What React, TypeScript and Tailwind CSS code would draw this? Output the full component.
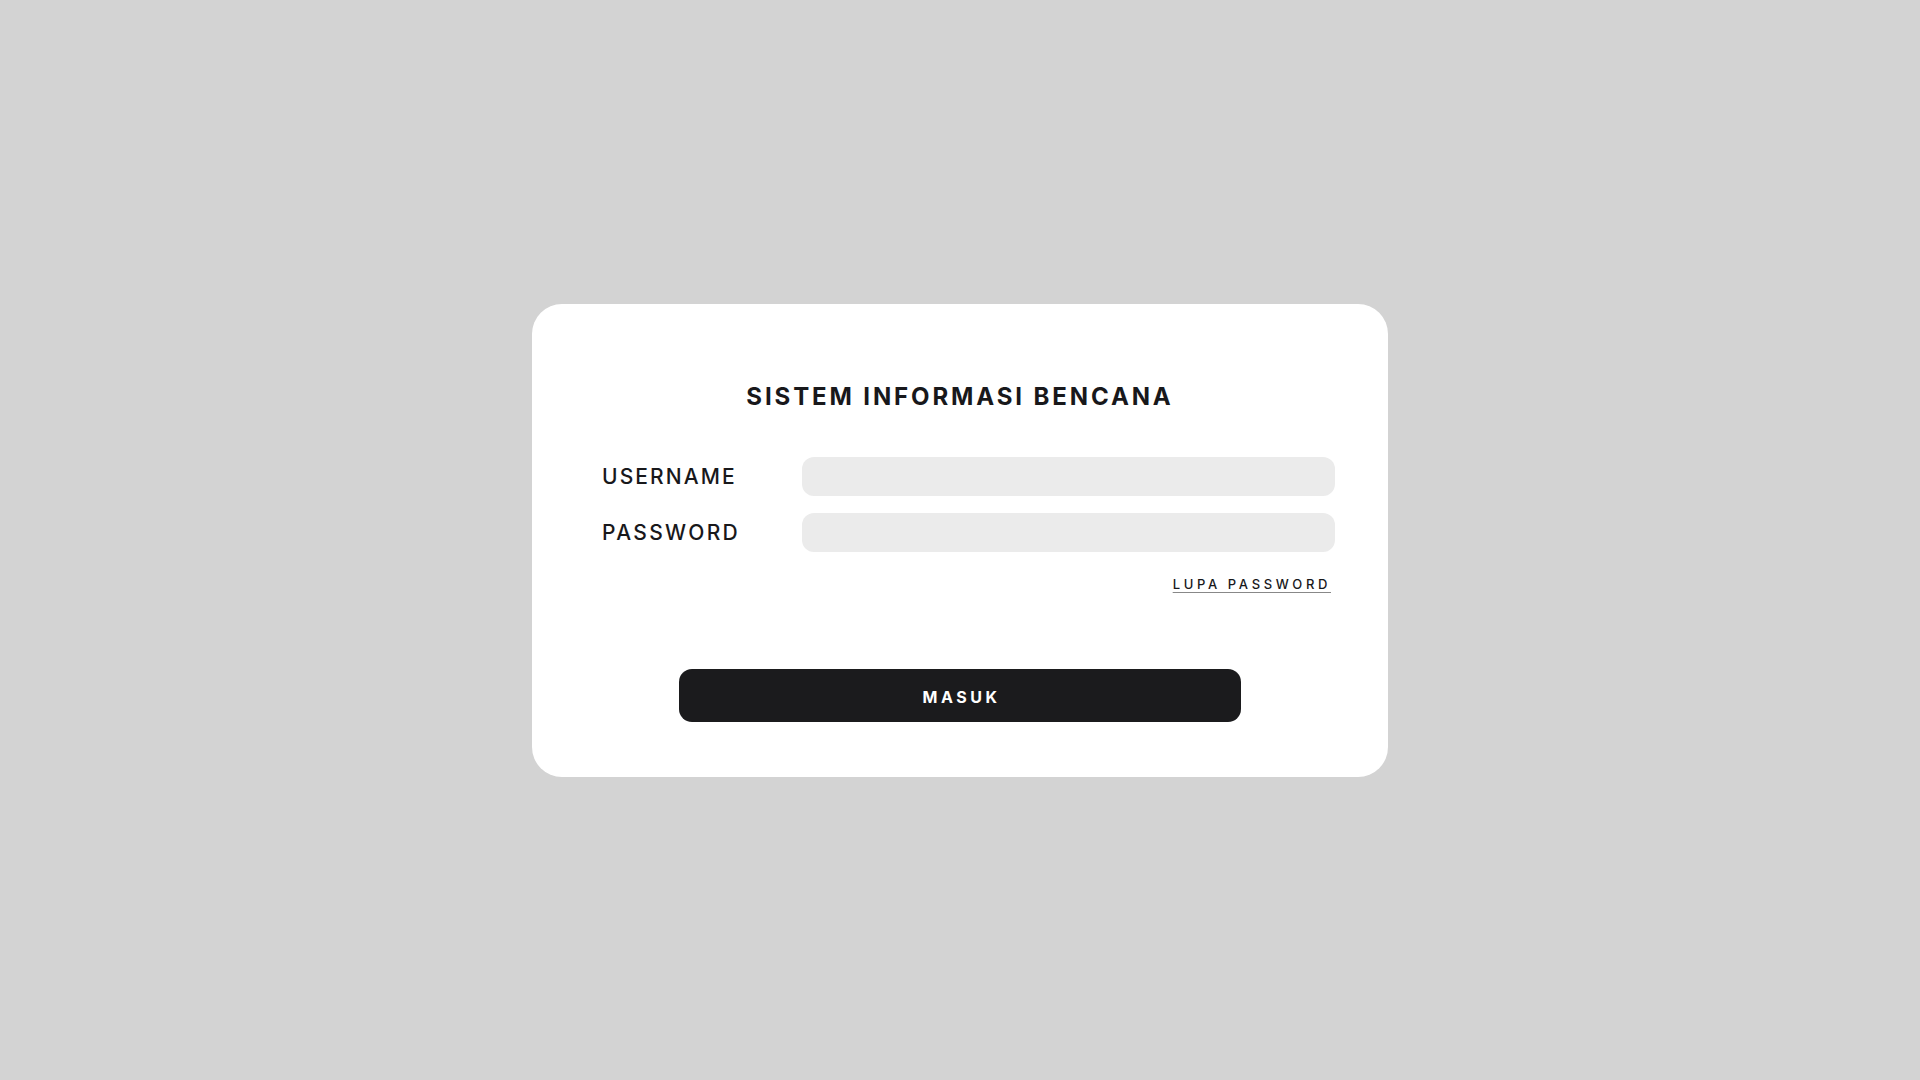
import { useState } from "react";

const App = () => {
  const [username, setUsername] = useState("");
  const [password, setPassword] = useState("");

  return (
    <div className="min-h-screen w-full bg-[#d3d3d3] flex items-center justify-center font-['Inter',sans-serif] text-[#18181b]">
      <div className="w-[856px] h-[473px] bg-white rounded-[30px] flex flex-col">
        <h1 className="mt-[77px] text-center text-[24px] leading-[32px] font-bold tracking-[0.12em]">
          SISTEM INFORMASI BENCANA
        </h1>

        <form
          className="mt-[44px] pl-[70px] pr-[53px] flex flex-col"
          onSubmit={(e) => e.preventDefault()}
        >
          <div className="flex items-center h-[39px]">
            <label className="w-[200px] text-[21px] font-medium tracking-[0.1em] pt-[1px]">
              USERNAME
            </label>
            <input
              type="text"
              value={username}
              onChange={(e) => setUsername(e.target.value)}
              className="flex-1 h-[39px] rounded-[12px] bg-[#ebebeb] px-4 outline-none"
            />
          </div>
          <div className="flex items-center h-[39px] mt-[17px]">
            <label className="w-[200px] text-[21px] font-medium tracking-[0.11em] pt-[1px]">
              PASSWORD
            </label>
            <input
              type="password"
              value={password}
              onChange={(e) => setPassword(e.target.value)}
              className="flex-1 h-[39px] rounded-[12px] bg-[#ebebeb] px-4 outline-none"
            />
          </div>
          <div className="flex justify-end mt-[24px] pr-[4px]">
            <a
              href="#"
              className="text-[13px] leading-[16px] font-medium tracking-[0.28em] underline decoration-[#888] underline-offset-[3px]"
            >
              LUPA PASSWORD
            </a>
          </div>
        </form>

        <div className="flex justify-center mt-[77px]">
          <button
            type="button"
            className="w-[562px] h-[53px] rounded-[13px] bg-[#1b1b1d] text-white text-[16px] font-bold tracking-[0.22em] pt-[3px] pl-[3px]"
          >
            MASUK
          </button>
        </div>
      </div>
    </div>
  );
};

export default App;
